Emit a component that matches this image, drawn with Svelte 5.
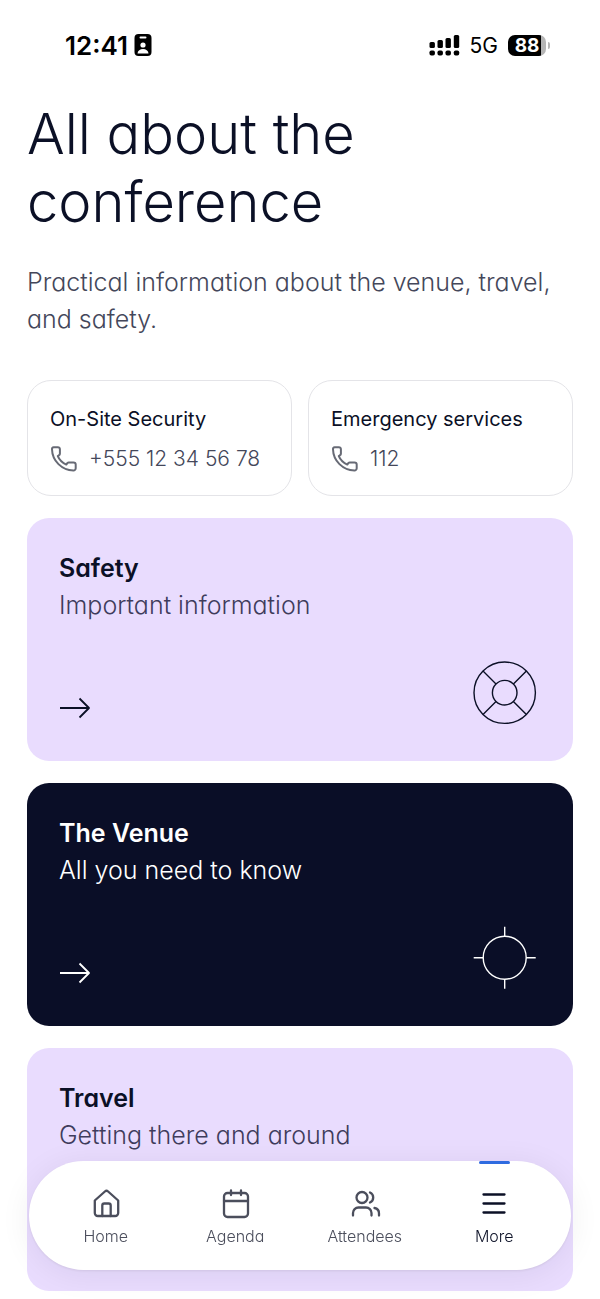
<script lang="ts">
	interface Contact {
		label: string;
		phone: string;
	}

	interface Topic {
		title: string;
		text: string;
		icon: 'lifebuoy' | 'target' | null;
		dark?: boolean;
	}

	const contacts: Contact[] = [
		{ label: 'On-Site Security', phone: '+555 12 34 56 78' },
		{ label: 'Emergency services', phone: '112' }
	];

	const topics: Topic[] = [
		{ title: 'Safety', text: 'Important information', icon: 'lifebuoy' },
		{ title: 'The Venue', text: 'All you need to know', icon: 'target', dark: true },
		{ title: 'Travel', text: 'Getting there and around', icon: null }
	];

	const tabs = ['Home', 'Agenda', 'Attendees', 'More'];
	let active = $state('More');
</script>

<div class="status">
	<div class="status-group">
		<span class="time">12:41</span>
		<svg width="18" height="22" viewBox="0 0 18 22" aria-hidden="true">
			<rect x="0.5" y="0" width="17" height="22" rx="4" fill="#000" />
			<rect x="5.5" y="2.5" width="7" height="2" rx="1" fill="#fff" />
			<circle cx="9" cy="11" r="2.6" fill="#fff" />
			<path d="M3.5 19.5c.2-3 2.6-4.5 5.5-4.5s5.3 1.5 5.5 4.5z" fill="#fff" />
		</svg>
	</div>
	<div class="status-group status-right">
		<svg width="31" height="22" viewBox="0 0 31 22" aria-hidden="true">
			<rect x="0.5" y="8" width="5.4" height="6" rx="1.5" />
			<rect x="8.5" y="6" width="5.4" height="8" rx="1.5" />
			<rect x="16.5" y="4" width="5.4" height="10" rx="1.5" />
			<rect x="24.8" y="1" width="5.4" height="13" rx="1.5" />
			<rect x="0.5" y="16.5" width="5.4" height="5" rx="1.8" />
			<rect x="8.5" y="16.5" width="5.4" height="5" rx="1.8" />
			<rect x="16.5" y="16.5" width="5.4" height="5" rx="1.8" />
			<rect x="24.8" y="16.5" width="5.4" height="5" rx="1.8" />
		</svg>
		<span class="network">5G</span>
		<div class="battery">
			<span class="battery-level">88</span>
		</div>
	</div>
</div>

<main class="page">
	<h1>All about the conference</h1>
	<p class="lead">Practical information about the venue, travel, and safety.</p>

	<div class="contacts">
		{#each contacts as contact}
			<a class="contact" href="tel:{contact.phone.replaceAll(' ', '')}">
				<span class="contact-label">{contact.label}</span>
				<span class="contact-phone">
					<svg width="28" height="28" viewBox="0 0 28 28" aria-hidden="true">
						<path
							d="M3.7 2.2h4.2a2 2 0 0 1 2 2v4.4a2 2 0 0 1-.9 1.6l-1.2.9c1.7 4 4.5 6.7 8.5 8.5l1-1.4a2 2 0 0 1 1.6-.8h4.6a2.2 2.2 0 0 1 2.2 2.2v3.7a2.200 2.200 0 0 1-2.300 2.200C11.800 25.100 2.300 16 2 4.200a1.900 1.900 0 0 1 1.700-2z"
						/>
					</svg>
					{contact.phone}
				</span>
			</a>
		{/each}
	</div>

	<div class="topics">
		{#each topics as topic}
			<a class="topic" class:dark={topic.dark} href="#{topic.title.toLowerCase().replace(' ', '-')}">
				<h2>{topic.title}</h2>
				<p>{topic.text}</p>
				<div class="topic-foot">
					<svg class="arrow" width="32" height="32" viewBox="0 0 32 32" aria-hidden="true">
						<path d="M1 15h29M20.5 5.5l9.5 9.5-9.5 9.5" />
					</svg>
					{#if topic.icon === 'lifebuoy'}
						<svg class="topic-icon" width="64" height="64" viewBox="0 0 64 64" aria-hidden="true">
							<circle cx="31.7" cy="31.7" r="30.7" />
							<circle cx="31.7" cy="31.7" r="12.3" />
							<path d="M10 10l13 13M53.4 10l-13 13M10 53.4l13-13M53.4 53.4l-13-13" />
						</svg>
					{:else if topic.icon === 'target'}
						<svg class="topic-icon" width="64" height="64" viewBox="0 0 64 64" aria-hidden="true">
							<circle cx="31.7" cy="31.7" r="21.5" />
							<path d="M31.7 .7v9.500M31.700 53.200v9.500M.7 31.700h9.500M53.200 31.700h9.500" />
						</svg>
					{/if}
				</div>
			</a>
		{/each}
	</div>
</main>

<nav class="tabbar">
	{#each tabs as tab}
		<button class="tab" class:active={active === tab} onclick={() => (active = tab)}>
			<svg width="32" height="32" viewBox="0 0 32 32" aria-hidden="true">
				{#if tab === 'Home'}
					<path d="M4.8 12.5 14.9 3.500a2.400 2.400 0 0 1 3.200 0L28.200 12.500V25a3 3 0 0 1-3 3H7.800a3 3 0 0 1-3-3z" />
					<path d="M12.300 28V17.500a2 2 0 0 1 2-2h4.400a2 2 0 0 1 2 2V28" />
				{:else if tab === 'Agenda'}
					<rect x="5" y="5" width="24" height="24" rx="3.5" />
					<path d="M5 13h24M12 2.5V7M22 2.5V7" />
				{:else if tab === 'Attendees'}
					<circle cx="13" cy="9.500" r="5.500" />
					<path d="M4 27.500V25a5.500 5.500 0 0 1 5.500-5.500h7.500a5.500 5.500 0 0 1 5.500 5.500v2.500" />
					<path d="M21 4.500a5.500 5.500 0 0 1 0 10M25.500 20a5.500 5.500 0 0 1 4.500 5.500v2" />
				{:else}
					<path d="M5.500 6.500h21M5.500 15.500h21M5.500 24.500h21" />
				{/if}
			</svg>
			{tab}
		</button>
	{/each}
</nav>

<style>
	:global(body) {
		background: #fff;
		color: #0b1026;
		font-family: Inter, 'Liberation Sans', sans-serif;
	}

	.status {
		display: flex;
		justify-content: space-between;
		align-items: center;
		height: 90px;
		padding: 0 54px 0 65px;
		color: #000;
	}

	.status-group {
		display: flex;
		align-items: center;
		gap: 6px;
	}

	.status-right {
		gap: 10px;
	}

	.time {
		font-size: 26px;
		font-weight: 600;
	}

	.network {
		font-size: 21px;
	}

	.battery {
		position: relative;
		width: 38px;
		height: 21px;
		border-radius: 7px;
		background: linear-gradient(90deg, #000 88%, #b5b5b5 88%);
		color: #fff;
	}

	.battery::after {
		content: '';
		position: absolute;
		top: 7px;
		right: -4px;
		width: 2px;
		height: 7px;
		border-radius: 0 3px 3px 0;
		background: #b5b5b5;
	}

	.battery-level {
		display: block;
		font-size: 19px;
		font-weight: 700;
		line-height: 21px;
		text-align: center;
	}

	/* cv11 is Inter's single-storey a */
	.page,
	.tab {
		font-feature-settings: 'cv11';
	}

	.page {
		padding: 10px 27px 8px;
	}

	h1 {
		margin: 0;
		font-size: 56px;
		font-weight: 300;
		line-height: 68px;
	}

	.lead {
		margin: 28px 0 42px;
		color: #44475a;
		font-size: 25px;
		font-weight: 300;
		line-height: 37px;
	}

	.contacts {
		display: grid;
		grid-template-columns: 1fr 1fr;
		gap: 16px;
		margin-bottom: 22px;
	}

	.contact {
		display: flex;
		flex-direction: column;
		gap: 10px;
		padding: 24px 22px 20px;
		border: 1px solid #e4e4e8;
		border-radius: 24px;
		color: inherit;
		text-decoration: none;
	}

	.contact-label {
		font-size: 20px;
		line-height: 28px;
	}

	.contact-phone {
		display: flex;
		align-items: center;
		gap: 11px;
		color: #44475a;
		font-size: 21px;
		font-weight: 300;
		line-height: 32px;
	}

	.topics {
		display: grid;
		gap: 22px;
	}

	.topic {
		display: block;
		padding: 32px 36px 36px 32px;
		border-radius: 22px;
		background: #e9dcfe;
		color: #0b1026;
		text-decoration: none;
	}

	.topic h2 {
		margin: 0;
		font-size: 25px;
		font-weight: 600;
		line-height: 37px;
	}

	.topic p {
		margin: 0;
		color: #3f3c5c;
		font-size: 25px;
		font-weight: 300;
		line-height: 37px;
	}

	.topic-foot {
		display: flex;
		justify-content: space-between;
		align-items: flex-end;
		height: 101px;
	}

	.topic.dark,
	.topic.dark p {
		color: #fff;
	}

	.topic.dark {
		background: #0a0e27;
	}

	.tabbar {
		position: fixed;
		right: 29px;
		bottom: 29px;
		left: 29px;
		display: grid;
		grid-template-columns: repeat(4, 1fr);
		box-sizing: border-box;
		height: 109px;
		padding: 0 12px;
		border-radius: 55px;
		background: #fff;
		box-shadow: 0 4px 32px rgba(11, 16, 38, 0.07), 0 1px 3px rgba(11, 16, 38, 0.08);
	}

	.tab {
		position: relative;
		display: flex;
		flex-direction: column;
		align-items: center;
		gap: 6px;
		padding: 27px 0 0;
		border: 0;
		background: none;
		color: #4b4e5c;
		font-family: inherit;
		font-size: 16px;
		font-weight: 300;
		line-height: 20px;
		cursor: pointer;
	}

	.tab.active {
		color: #0b1026;
	}

	.tab.active::before {
		content: '';
		position: absolute;
		top: 0;
		width: 31px;
		height: 3px;
		border-radius: 2px;
		background: #2f6be0;
	}

	.contact-phone svg,
	.topic svg,
	.tab svg {
		fill: none;
		stroke: currentColor;
		stroke-linejoin: round;
	}

	.contact-phone svg {
		color: #676a75;
		stroke-width: 2;
	}

	.arrow {
		stroke-width: 1.8;
	}

	.topic-icon {
		stroke-width: 1.4;
	}

	.tab svg {
		stroke-width: 2.3;
		stroke-linecap: round;
	}
</style>
